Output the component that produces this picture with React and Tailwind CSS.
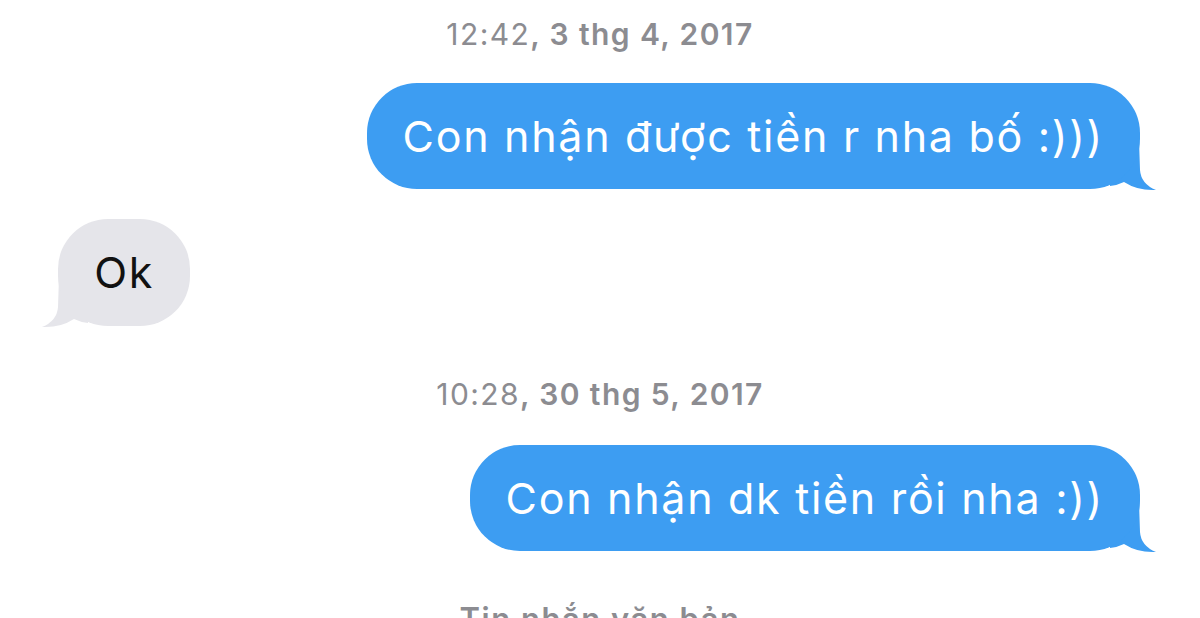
import React from "react";

const font = { fontFamily: "Inter, 'Noto Sans', sans-serif" };

const Tail = ({ color, flip }) => (
  <svg
    width="48"
    height="51"
    viewBox="0 0 48 51"
    className={
      flip
        ? "absolute left-[-18px] bottom-[-2px] -scale-x-100"
        : "absolute right-[-18px] bottom-[-2px]"
    }
  >
    <path d="M29 0 L30 30 Q31 44 46 50 Q28 51 14 42 Q8 45 0 46 L0 0 Z" fill={color} />
  </svg>
);

const Stamp = ({ time, date, className }) => (
  <div className={"text-center text-[30px] leading-[36px] tracking-[1.4px] text-[#8c8c91] " + className}>
    <span className="font-normal">{time}</span>
    <span className="font-semibold">, {date}</span>
  </div>
);

const Sent = ({ text, className }) => (
  <div className={"relative self-end mr-[60px] " + className}>
    <div className="relative z-10 h-[106px] rounded-[50px] bg-[#3d9df2] pl-[36px] pr-[36px] flex items-center text-white text-[43px] tracking-[1.7px]">
      {text}
    </div>
    <Tail color="#3d9df2" />
  </div>
);

export default function App() {
  return (
    <div className="w-[1200px] h-[618px] overflow-hidden bg-white flex flex-col" style={font}>
      <Stamp time="12:42" date="3 thg 4, 2017" className="mt-[16px]" />
      <Sent text="Con nhận được tiền r nha bố :)))" className="mt-[31px]" />

      <div className="relative self-start ml-[58px] mt-[30px]">
        <div className="relative z-10 h-[107px] w-[132px] rounded-[50px] bg-[#e5e5ea] flex items-center justify-center text-[#111] text-[43px] tracking-[1.5px]">
          Ok
        </div>
        <Tail color="#e5e5ea" flip />
      </div>

      <Stamp time="10:28" date="30 thg 5, 2017" className="mt-[50px]" />
      <Sent text="Con nhận dk tiền rồi nha :))" className="mt-[33px]" />

      <div className="mt-[50px] text-center text-[31px] leading-[36px] tracking-[1.5px] font-semibold text-[#8c8c91]">
        Tin nhắn văn bản
      </div>
    </div>
  );
}
